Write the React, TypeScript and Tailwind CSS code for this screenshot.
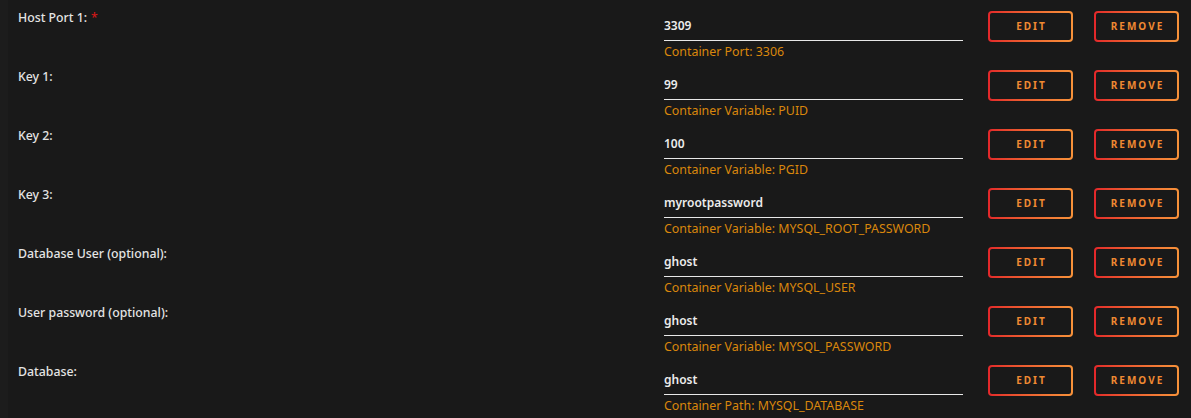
import React from "react";

const rows = [
  { label: "Host Port 1:", required: true, value: "3309", help: "Container Port: 3306" },
  { label: "Key 1:", value: "99", help: "Container Variable: PUID" },
  { label: "Key 2:", value: "100", help: "Container Variable: PGID" },
  { label: "Key 3:", value: "myrootpassword", help: "Container Variable: MYSQL_ROOT_PASSWORD" },
  { label: "Database User (optional):", value: "ghost", help: "Container Variable: MYSQL_USER" },
  { label: "User password (optional):", value: "ghost", help: "Container Variable: MYSQL_PASSWORD" },
  { label: "Database:", value: "ghost", help: "Container Path: MYSQL_DATABASE" },
];

function GradButton({ children }: { children: React.ReactNode }) {
  return (
    <div className="w-[85px] h-[31px] rounded-[4px] p-[2px] bg-gradient-to-r from-[#e3262a] to-[#f7923a]">
      <div className="w-full h-full rounded-[2px] bg-[#191919] flex items-center justify-center text-[10px] font-bold tracking-[2px] text-[#f08a32] pl-[2px]">
        {children}
      </div>
    </div>
  );
}

export default function App() {
  return (
    <div
      className="w-[1191px] h-[418px] bg-[#191919] overflow-hidden flex"
      style={{ fontFamily: '"Noto Sans", "Open Sans", sans-serif' }}
    >
      <div className="w-[8px] bg-[#1c1c1c]" />
      <div className="flex-1 flex flex-col">
        {rows.map((r, i) => (
          <div key={i} className="h-[59px] flex shrink-0">
            <div className="flex-1 pl-[10px] pt-[9px] text-[12.3px] font-medium text-[#e4e4e4] leading-[18px]">
              {r.label}
              {r.required && <span className="text-[#d01818] ml-[4px]">*</span>}
            </div>
            <div className="w-[299px] flex flex-col pt-[17px]">
              <div className="text-[12px] font-semibold text-[#ececec] leading-[18px] border-b border-[#e8e8e8] pb-[5px] h-[24px]">
                {r.value}
              </div>
              <div className="text-[12.4px] text-[#d9870c] leading-[18px] pt-[2px]">{r.help}</div>
            </div>
            <div className="flex gap-[21px] pt-[11px] ml-[25px] mr-[12px]">
              <GradButton>EDIT</GradButton>
              <GradButton>REMOVE</GradButton>
            </div>
          </div>
        ))}
      </div>
    </div>
  );
}
